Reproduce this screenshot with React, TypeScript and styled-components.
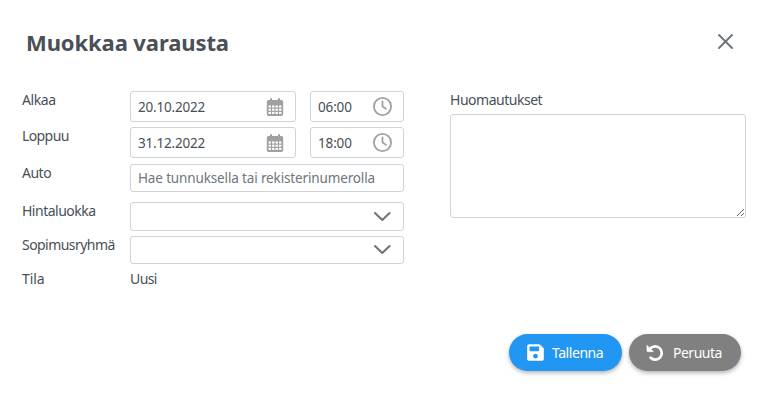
import React from "react";
import styled, { createGlobalStyle } from "styled-components";
import { FaRegClock } from "react-icons/fa6";
import { FaSave } from "react-icons/fa";

const GlobalStyle = createGlobalStyle`
  * { box-sizing: border-box; }
  body { margin: 0; background: #fff; color: #495057; font-family: "Noto Sans", sans-serif; font-size: 14px; }
`;

const Dialog = styled.main`
  width: 767px;
  height: 404px;
  display: flex;
  flex-direction: column;
  background: #fff;
`;

const Header = styled.header`
  height: 90px;
  padding: 27px 34px 0 26px;
  display: flex;
  justify-content: space-between;
  align-items: flex-start;
`;

const Title = styled.h1`
  margin: 0;
  font-size: 22px;
  line-height: 30px;
  font-weight: 700;
  letter-spacing: -0.1px;
  white-space: nowrap;
`;

const CloseButton = styled.button`
  margin: 7px 0 0;
  padding: 0;
  border: 0;
  background: none;
  width: 15px;
  height: 15px;
  display: flex;
  color: #6c757d;
`;

const Body = styled.section`
  height: 244px;
  padding-left: 22px;
  display: flex;
  gap: 46px;
`;

const Fields = styled.div`
  width: 382px;
`;

const Row = styled.div<{ $gap: number }>`
  display: flex;
  align-items: flex-start;
  margin-bottom: ${(p) => p.$gap}px;
`;

const Text = styled.span<{ $spacing?: number }>`
  line-height: 19px;
  letter-spacing: ${(p) => p.$spacing ?? 0}px;
  white-space: nowrap;
`;

const Label = styled.label<{ $spacing?: number }>`
  width: 108px;
  flex: none;
  line-height: 19px;
  letter-spacing: ${(p) => p.$spacing ?? 0}px;
  white-space: nowrap;
`;

const Field = styled.div<{ $width: number; $height: number }>`
  width: ${(p) => p.$width}px;
  height: ${(p) => p.$height}px;
  margin-top: 1px;
  border: 1px solid #ced4da;
  border-radius: 3px;
  padding: 0 11px 0 7px;
  display: flex;
  align-items: center;
  justify-content: space-between;
  color: #495057;
  & + & { margin-left: 14px; }
  svg { flex: none; }
`;

const Value = styled.span<{ $muted?: boolean; $spacing?: number }>`
  font-size: 13.5px;
  line-height: 19px;
  padding-top: 1px;
  letter-spacing: ${(p) => p.$spacing ?? 0}px;
  color: ${(p) => (p.$muted ? "#6c757d" : "#495057")};
  white-space: nowrap;
`;

const Chevron = styled.svg`
  margin-left: auto;
  color: #6c757d;
`;

const Notes = styled.div`
  display: flex;
  flex-direction: column;
  gap: 5px;
`;

const NotesInput = styled.textarea`
  display: block;
  width: 296px;
  height: 104px;
  border: 1px solid #ced4da;
  border-radius: 3px;
  margin: 0;
  resize: both;
`;

const Footer = styled.footer`
  padding-right: 26px;
  display: flex;
  justify-content: flex-end;
  gap: 7px;
`;

const Button = styled.button<{ $color: string; $width: number; $spacing: number; $gap: number }>`
  width: ${(p) => p.$width}px;
  height: 37px;
  padding: 0 0 0 17px;
  display: flex;
  align-items: center;
  gap: ${(p) => p.$gap}px;
  border: 0;
  border-radius: 19px;
  background: ${(p) => p.$color};
  color: #fff;
  font: 14px/19px "Noto Sans", sans-serif;
  letter-spacing: ${(p) => p.$spacing}px;
  white-space: nowrap;
  box-shadow: 0 2px 4px rgba(0, 0, 0, 0.3);
`;

function ChevronIcon() {
  return (
    <Chevron width="20" height="12" viewBox="0 0 20 12" fill="none" stroke="currentColor" strokeWidth="2.1" strokeLinecap="round" strokeLinejoin="round">
      <path d="M3 2 10.3 9 17.6 2" />
    </Chevron>
  );
}

const calendarColumns = [2.5, 6, 9.5, 13];
const calendarRows = [7.5, 10.7, 13.9];

function CalendarIcon() {
  return (
    <svg width="18" height="18" viewBox="0 0 18 18">
      <path fill="#a0a0a0" d="M2.500 2H4V1q0-1 1-1t1 1v1h6V1q0-1 1-1t1 1v1h1.500Q17.200 2 17.200 3.700v12.600Q17.200 18 15.500 18h-13Q.8 18 .8 16.300V3.700Q.8 2 2.500 2Z" />
      {calendarRows.map((y) =>
        calendarColumns.map((x) => <rect key={`${x}-${y}`} x={x} y={y} width="2.500" height="2" fill="#fff" />)
      )}
    </svg>
  );
}

function UndoIcon() {
  return (
    <svg width="18" height="18" viewBox="0 0 18 18">
      <path d="M3.700 5.300A6.600 6.600 0 1 1 4.600 13.800" fill="none" stroke="currentColor" strokeWidth="2.700" strokeLinecap="round" />
      <path d="M1 1.400v5.400q0 .8.800.8h5.400z" fill="currentColor" stroke="currentColor" strokeWidth=".8" strokeLinejoin="round" />
    </svg>
  );
}

function DateTimeRow({ label, date, time, gap, spacing }: { label: string; date: string; time: string; gap: number; spacing: number }) {
  return (
    <Row $gap={gap}>
      <Label $spacing={spacing}>{label}</Label>
      <Field $width={166} $height={31}>
        <Value $spacing={-0.2}>{date}</Value>
        <CalendarIcon />
      </Field>
      <Field $width={94} $height={31}>
        <Value $spacing={-0.15}>{time}</Value>
        <FaRegClock size={19} color="#a0a0a0" />
      </Field>
    </Row>
  );
}

export default function App() {
  return (
    <>
      <GlobalStyle />
      <Dialog>
        <Header>
          <Title>Muokkaa varausta</Title>
          <CloseButton aria-label="Sulje">
            <svg width="15" height="15" viewBox="0 0 15 15" fill="none" stroke="currentColor" strokeWidth="1.9" strokeLinecap="round">
              <path d="M1 1 14 14M14 1 1 14" />
            </svg>
          </CloseButton>
        </Header>
        <Body>
          <Fields>
            <DateTimeRow label="Alkaa" date="20.10.2022" time="06:00" gap={4} spacing={-0.4} />
            <DateTimeRow label="Loppuu" date="31.12.2022" time="18:00" gap={5} spacing={-0.6} />
            <Row $gap={9}>
              <Label $spacing={-0.5}>Auto</Label>
              <Field $width={274} $height={28}>
                <Value $muted $spacing={-0.14}>Hae tunnuksella tai rekisterinumerolla</Value>
              </Field>
            </Row>
            <Row $gap={4}>
              <Label $spacing={-0.5}>Hintaluokka</Label>
              <Field $width={274} $height={29}><ChevronIcon /></Field>
            </Row>
            <Row $gap={5}>
              <Label $spacing={-0.55}>Sopimusryhmä</Label>
              <Field $width={274} $height={28}><ChevronIcon /></Field>
            </Row>
            <Row $gap={0}>
              <Label $spacing={-0.1}>Tila</Label>
              <Text $spacing={-0.6}>Uusi</Text>
            </Row>
          </Fields>
          <Notes>
            <Text as="label" $spacing={-0.48}>Huomautukset</Text>
            <NotesInput aria-label="Huomautukset" />
          </Notes>
        </Body>
        <Footer>
          <Button $color="#2196f3" $width={113} $spacing={-0.45} $gap={7}>
            <FaSave size={19} />
            Tallenna
          </Button>
          <Button $color="#808080" $width={112} $spacing={-0.5} $gap={9}>
            <UndoIcon />
            Peruuta
          </Button>
        </Footer>
      </Dialog>
    </>
  );
}
